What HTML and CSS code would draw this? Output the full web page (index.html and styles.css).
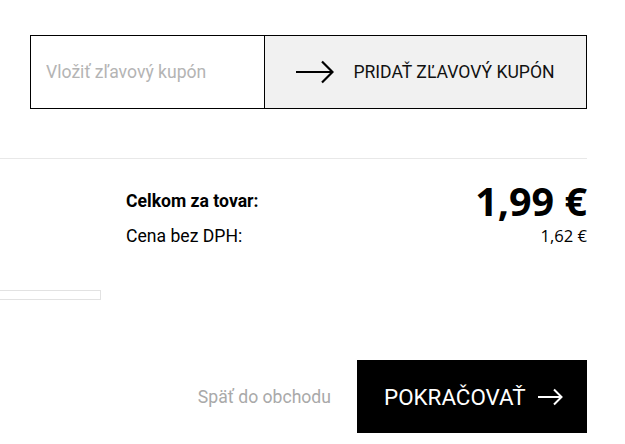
FILE: index.html
```html
<!DOCTYPE html>
<html lang="sk">
<head>
<meta charset="utf-8">
<link rel="stylesheet" href="styles.css">
</head>
<body>
<div class="cart">
  <form class="coupon">
    <input class="coupon-input" type="text" placeholder="Vložiť zľavový kupón">
    <button class="coupon-btn" type="button">
      <svg class="arrow-lg" width="38" height="24" viewBox="0 0 38 24"><path d="M0 12H36M26 1.5L36.5 12L26 22.5" fill="none" stroke="#000" stroke-width="2.2"/></svg>
      <span>PRIDAŤ ZĽAVOVÝ KUPÓN</span>
    </button>
  </form>
  <hr class="divider">
  <div class="totals">
    <div class="label strong">Celkom za tovar:</div>
    <div class="price big">1,99 €</div>
    <div class="label">Cena bez DPH:</div>
    <div class="price small">1,62 €</div>
  </div>
  <div class="progress"></div>
  <div class="actions">
    <a class="back" href="#">Späť do obchodu</a>
    <button class="continue" type="button">
      <span>POKRAČOVAŤ</span>
      <svg width="25" height="18" viewBox="0 0 25 18"><path d="M0 9H23.5M16 1.5L23.5 9L16 16.5" fill="none" stroke="#fff" stroke-width="2"/></svg>
    </button>
  </div>
</div>
</body>
</html>
```
FILE: styles.css
```css
* { box-sizing: border-box; }
html, body { margin: 0; padding: 0; background: #fff; }
body { font-family: Roboto, "Liberation Sans", sans-serif; color: #000; }

.cart { width: 587px; padding-top: 35px; }

.coupon {
  display: flex;
  margin: 0 0 0 30px;
  height: 74px;
  border: 1px solid #000;
}
.coupon-input {
  width: 234px;
  border: 0;
  border-right: 1px solid #000;
  padding: 0 0 0 15px;
  font-family: Roboto, sans-serif;
  font-size: 17.6px;
  outline: none;
  background: #fff;
}
.coupon-input::placeholder { color: #b4b4b4; }
.coupon-btn {
  flex: 1;
  display: flex;
  align-items: center;
  justify-content: center;
  gap: 19px;
  border: 0;
  margin: 0;
  padding: 0;
  background: #f1f1f1;
  font-family: Roboto, sans-serif;
  font-size: 17.6px;
  color: #111;
}
.arrow-lg { display: block; }

.divider {
  margin: 49px 0 0;
  border: 0;
  height: 1px;
  background: #e8e8e8;
}

.totals {
  display: grid;
  grid-template-columns: 1fr auto;
  grid-template-rows: 44px 20px;
  row-gap: 3px;
  align-items: center;
  margin: 20px 0 0 126px;
}
.label { font-size: 17.6px; line-height: 20px; }
.label.strong { font-weight: 700; }
.price { text-align: right; font-family: "Open Sans", sans-serif; }
.price.big { font-size: 39.5px; font-weight: 700; line-height: 44px; }
.price.small { font-size: 16.6px; line-height: 20px; }

.progress {
  margin-top: 44px;
  width: 101px;
  height: 10px;
  border: 1px solid #e2e2e2;
  border-left: 0;
}

.actions {
  display: flex;
  justify-content: flex-end;
  align-items: center;
  gap: 26px;
  margin-top: 60px;
}
.back {
  font-size: 17.6px;
  color: #a9a9a9;
  text-decoration: none;
}
.continue {
  display: flex;
  align-items: center;
  gap: 12px;
  width: 230px;
  height: 73px;
  padding: 0 0 0 27px;
  border: 0;
  background: #000;
  color: #fff;
  font-family: Roboto, sans-serif;
  font-size: 22.4px;
}
.continue svg { display: block; }
```
